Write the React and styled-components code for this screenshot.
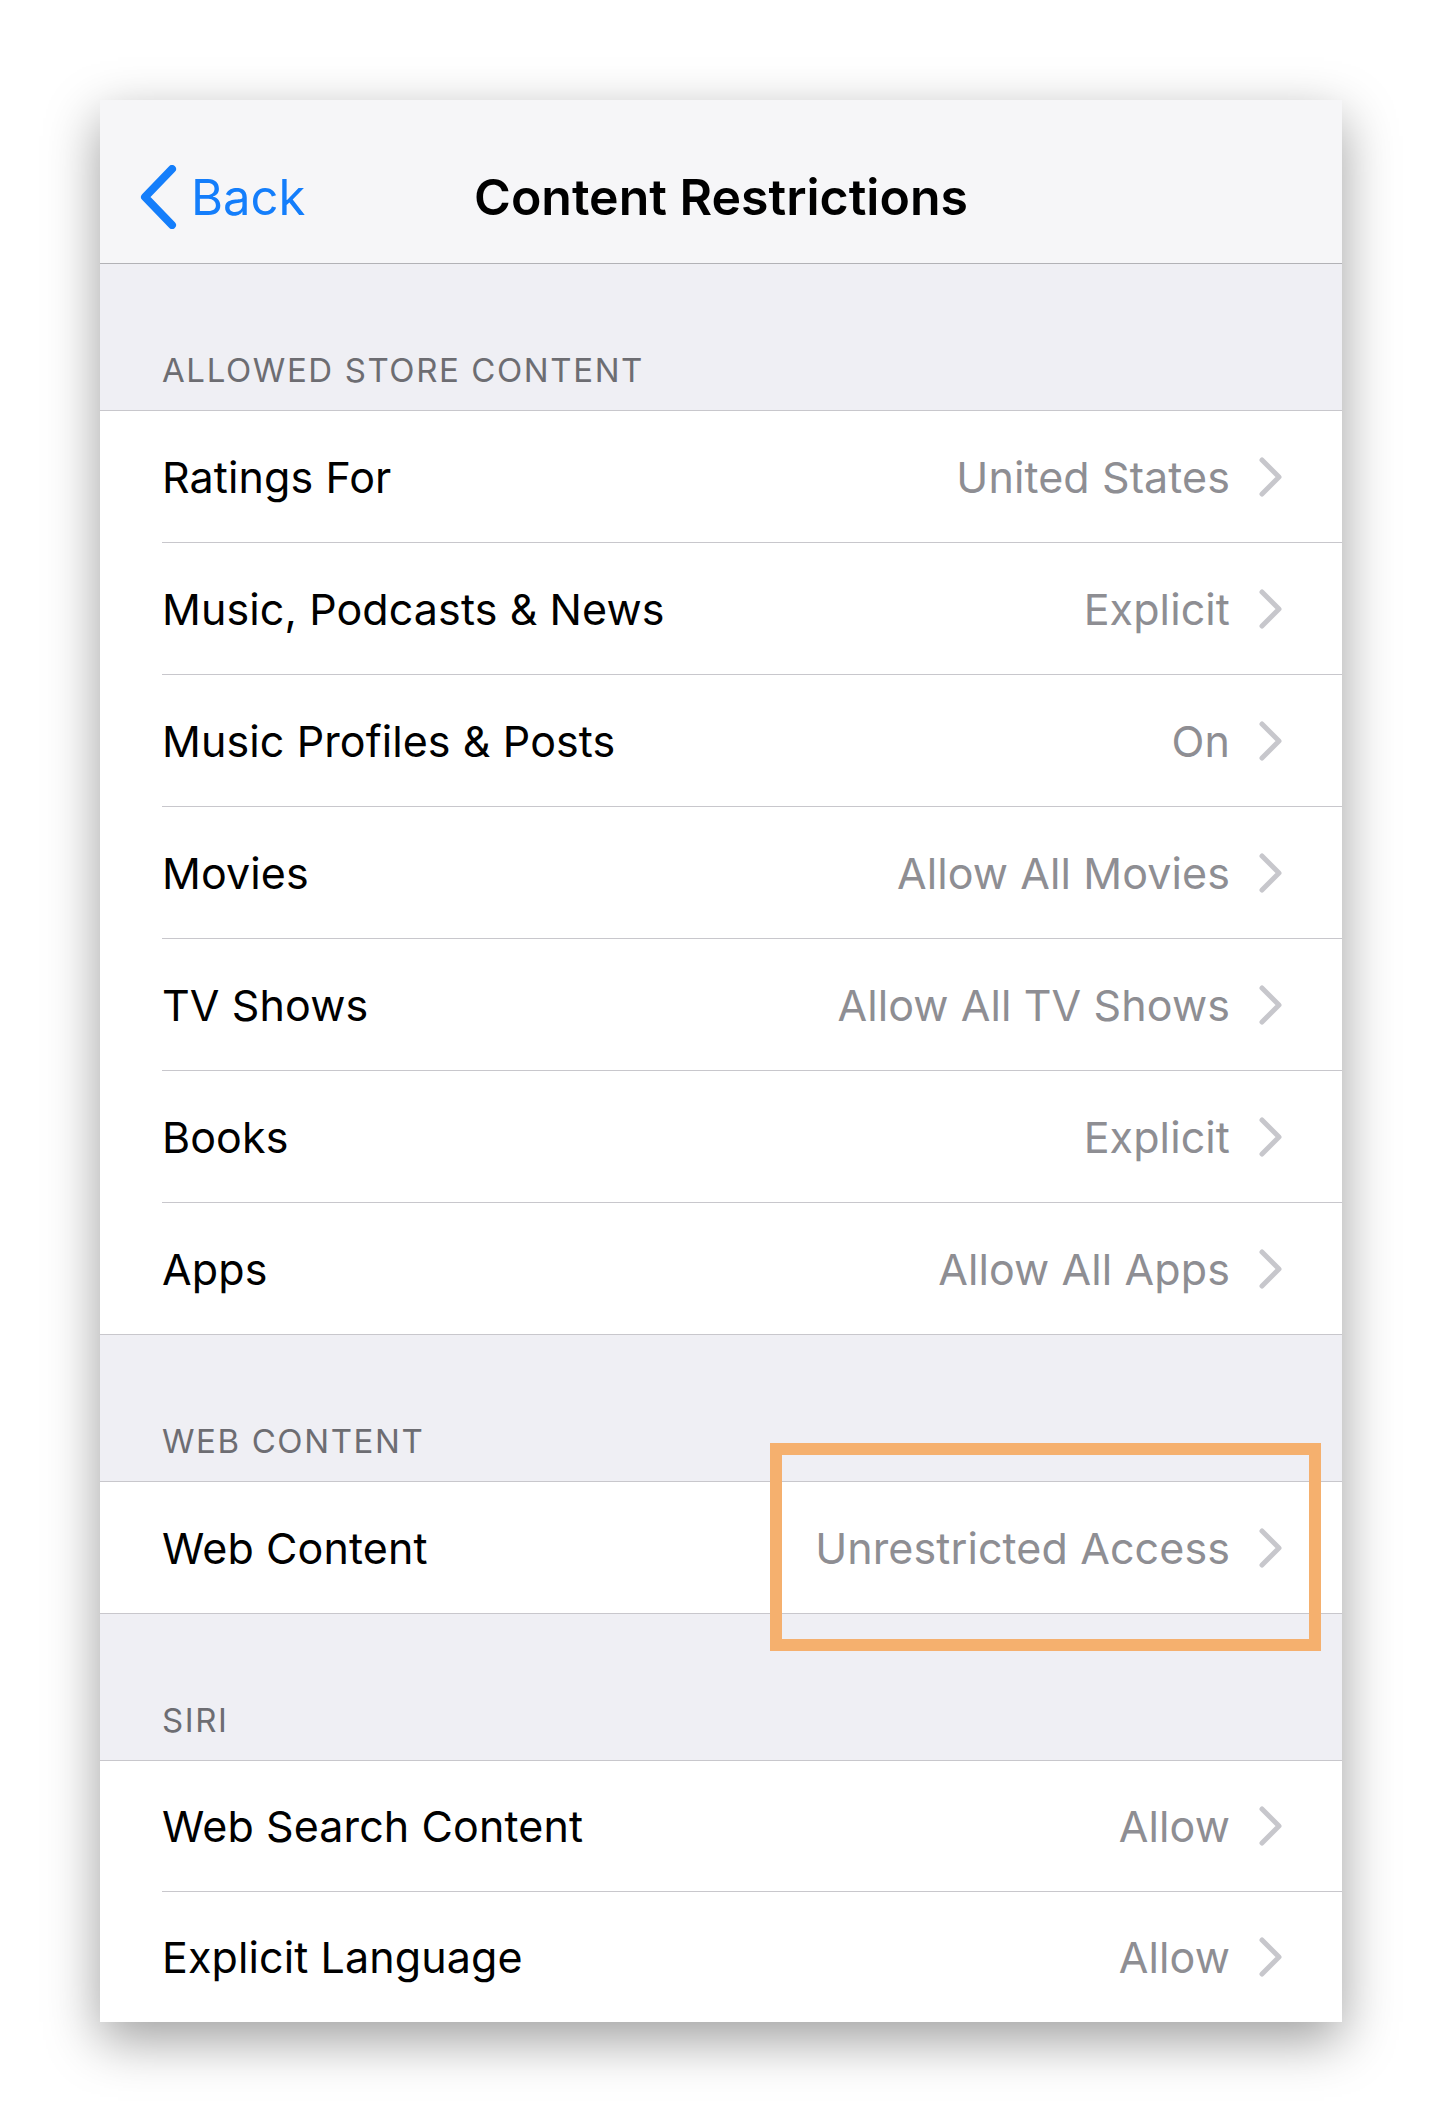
import React from "react";
import styled, { createGlobalStyle } from "styled-components";

const GlobalStyle = createGlobalStyle`
  body {
    margin: 0;
    background: #ffffff;
    font-family: Inter, "Noto Sans", "Liberation Sans", sans-serif;
    -webkit-font-smoothing: antialiased;
  }
`;

const Page = styled.div`
  padding: 100px 100px 100px 100px;
`;

const Card = styled.div`
  width: 1242px;
  background: #efeff4;
  box-shadow: 0 18px 50px rgba(0, 0, 0, 0.38);
`;

const NavBar = styled.header`
  height: 132px;
  padding-top: 31px;
  display: grid;
  grid-template-columns: 1fr auto 1fr;
  align-items: center;
  background: #f6f6f8;
  border-bottom: 1px solid #b2b2b6;
`;

const BackButton = styled.div`
  display: flex;
  align-items: center;
  gap: 13px;
  padding-left: 38px;
  color: #147efb;
  font-size: 49px;
  line-height: 1;
`;

const Title = styled.h1`
  margin: 0;
  text-align: center;
  font-size: 50px;
  font-weight: 600;
  color: #000;
  line-height: 1;
  letter-spacing: 0px;
`;

const SectionHeader = styled.div`
  height: ${(p) => p.$height}px;
  box-sizing: border-box;
  display: flex;
  align-items: flex-end;
  padding: 0 0 20px 62px;
  font-size: 33px;
  line-height: 40px;
  color: #6d6d72;
  letter-spacing: 1.6px;
`;

const List = styled.div`
  background: #fff;
  border-top: 1px solid #c8c7cc;
  border-bottom: ${(p) => (p.$last ? "none" : "1px solid #c8c7cc")};
`;

const Row = styled.div`
  position: relative;
  height: ${(p) => p.$height}px;
  margin-left: 62px;
  padding-right: 59px;
  display: flex;
  align-items: center;
  border-bottom: ${(p) => (p.$last ? "none" : "1px solid #c8c7cc")};
`;

const Label = styled.span`
  flex: 1;
  font-size: 43px;
  color: #000;
  letter-spacing: 0.1px;
`;

const Value = styled.span`
  font-size: 43px;
  color: #8e8e93;
  letter-spacing: 0.1px;
  margin-right: 29px;
`;

const Highlight = styled.div`
  position: absolute;
  top: -39px;
  bottom: -38px;
  left: 608px;
  right: 21px;
  border: 12px solid #f5b06e;
  pointer-events: none;
`;

const Chevron = () => (
  <svg width="24" height="40" viewBox="0 0 24 40">
    <path
      d="M3 3 L20 20 L3 37"
      fill="none"
      stroke="#c7c7cc"
      strokeWidth="5"
      strokeLinecap="round"
      strokeLinejoin="round"
    />
  </svg>
);

const BackChevron = () => (
  <svg width="40" height="64" viewBox="0 0 40 64">
    <path
      d="M34 4 L7 32 L34 60"
      fill="none"
      stroke="#147efb"
      strokeWidth="8"
      strokeLinecap="round"
      strokeLinejoin="round"
    />
  </svg>
);

const sections = [
  {
    title: "ALLOWED STORE CONTENT",
    rowHeight: 131,
    rows: [
      ["Ratings For", "United States"],
      ["Music, Podcasts & News", "Explicit"],
      ["Music Profiles & Posts", "On"],
      ["Movies", "Allow All Movies"],
      ["TV Shows", "Allow All TV Shows"],
      ["Books", "Explicit"],
      ["Apps", "Allow All Apps"],
    ],
  },
  {
    title: "WEB CONTENT",
    rowHeight: 131,
    rows: [["Web Content", "Unrestricted Access", true]],
  },
  {
    title: "SIRI",
    rowHeight: 130,
    rows: [
      ["Web Search Content", "Allow"],
      ["Explicit Language", "Allow"],
    ],
  },
];

export default function App() {
  return (
    <Page>
      <GlobalStyle />
      <Card>
        <NavBar>
          <BackButton>
            <BackChevron />
            <span>Back</span>
          </BackButton>
          <Title>Content Restrictions</Title>
          <div />
        </NavBar>
        {sections.map((section, si) => (
          <div key={section.title}>
            <SectionHeader $height={146}>{section.title}</SectionHeader>
            <List $last={si === sections.length - 1}>
              {section.rows.map(([label, value, marked], ri) => (
                <Row
                  key={label}
                  $height={section.rowHeight}
                  $last={ri === section.rows.length - 1}
                >
                  <Label>{label}</Label>
                  <Value>{value}</Value>
                  <Chevron />
                  {marked && <Highlight />}
                </Row>
              ))}
            </List>
          </div>
        ))}
      </Card>
    </Page>
  );
}
